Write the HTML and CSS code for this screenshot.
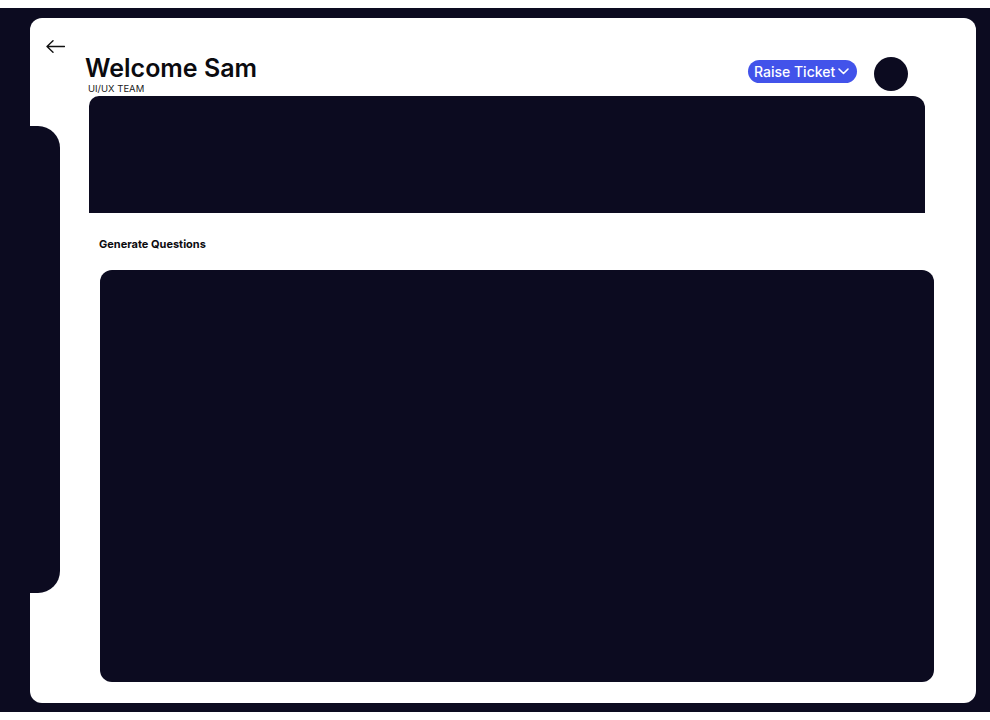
FILE: index.html
```html
<!DOCTYPE html>
<html lang="en">
<head>
<meta charset="utf-8">
<title>Welcome Sam</title>
<link rel="stylesheet" href="styles.css">
</head>
<body>
<div class="frame">
  <div class="card">
    <header class="header">
      <svg class="back" viewBox="0 0 19 13" width="19" height="13" fill="none" stroke="#111" stroke-width="1.4" stroke-linecap="round" stroke-linejoin="round">
        <path d="M18.5 6.5H1M7 0.8L1 6.5L7 12.2"/>
      </svg>
      <div class="titles">
        <h1 class="title">Welcome Sam</h1>
        <div class="subtitle">UI/UX TEAM</div>
      </div>
      <div class="actions">
        <button class="ticket">Raise Ticket
          <svg class="chev" viewBox="0 0 11 7" width="11" height="7" fill="none" stroke="#fff" stroke-width="1.6" stroke-linecap="round" stroke-linejoin="round"><path d="M1 1L5.5 5.5L10 1"/></svg>
        </button>
        <div class="avatar"></div>
      </div>
    </header>
    <div class="body">
      <div class="tab"></div>
      <main class="content">
        <div class="banner"></div>
        <div class="label">Generate Questions</div>
        <div class="panel"></div>
      </main>
    </div>
  </div>
</div>
</body>
</html>
```
FILE: styles.css
```css
* { box-sizing: border-box; }
html, body { margin: 0; padding: 0; background: #ffffff; }
body { font-family: Inter, "Noto Sans", sans-serif; color: #0b0b0f; }

.frame {
  margin-top: 8px;
  height: 704px;
  background: #0c0b20;
  padding: 10px 14px 9px 30px;
}
.card {
  width: 946px;
  height: 685px;
  background: #ffffff;
  border-radius: 12px;
  display: flex;
  flex-direction: column;
}
.header {
  display: flex;
  align-items: flex-start;
  height: 78px;
  padding: 0 68px 0 16px;
}
.back { margin-top: 22px; flex: none; }
.titles { margin-left: 20px; margin-top: 35px; }
.title {
  margin: 0;
  font-size: 25px;
  font-weight: 600;
  line-height: 30px;
  color: #0b0b0f;
}
.subtitle {
  margin-left: 3px;
  font-size: 9.5px;
  line-height: 12px;
  color: #1a1a1a;
}
.actions {
  margin-left: auto;
  display: flex;
  align-items: flex-start;
  gap: 17px;
}
.ticket {
  margin-top: 42px;
  height: 23px;
  width: 109px;
  padding: 0 0 0 6px;
  border: none;
  border-radius: 12px;
  background: #4253ea;
  color: #ffffff;
  font-family: Inter, "Noto Sans", sans-serif;
  font-size: 14px;
  font-weight: 500;
  display: flex;
  align-items: center;
  gap: 3px;
}
.chev { flex: none; }
.avatar {
  margin-top: 39px;
  width: 34px;
  height: 34px;
  border-radius: 50%;
  background: #0c0b20;
}
.body { display: flex; flex: 1; }
.tab {
  width: 30px;
  height: 467px;
  margin-top: 30px;
  background: #0c0b20;
  border-radius: 0 22px 22px 0;
  flex: none;
}
.content {
  margin-left: 29px;
  width: 836px;
  display: flex;
  flex-direction: column;
}
.banner {
  height: 117px;
  background: #0c0b20;
  border-radius: 10px 12px 0 0;
}
.label {
  margin-top: 24px;
  padding-left: 10px;
  font-size: 11px;
  font-weight: 700;
  line-height: 14px;
  color: #0b0b0f;
}
.panel {
  margin-top: 19px;
  margin-left: 11px;
  width: 834px;
  height: 412px;
  background: #0c0b20;
  border-radius: 12px;
}
```
